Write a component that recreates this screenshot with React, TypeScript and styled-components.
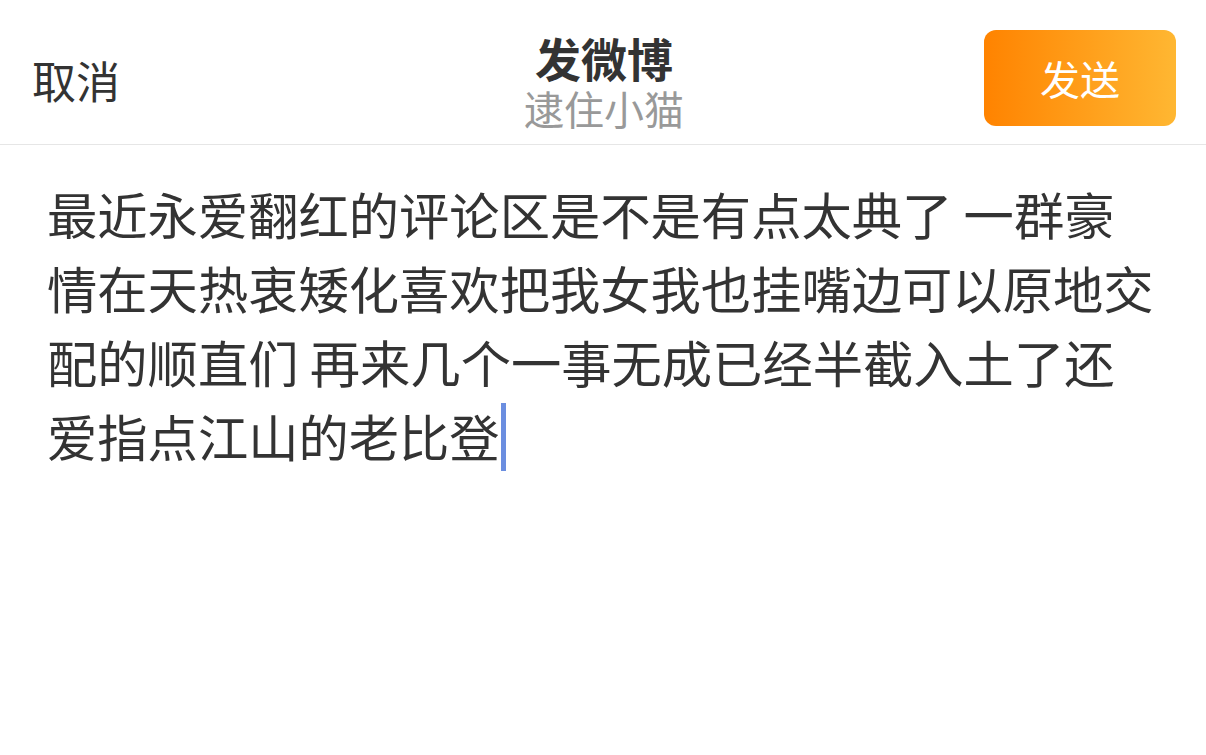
import styled, { createGlobalStyle } from 'styled-components';

const GlobalStyle = createGlobalStyle`
  html, body {
    margin: 0;
    padding: 0;
    background: #ffffff;
  }
  body {
    font-family: "Noto Sans CJK SC", "Noto Sans", sans-serif;
    color: #333333;
  }
`;

const Page = styled.div`
  width: 1206px;
  height: 755px;
  background: #ffffff;
  overflow: hidden;
`;

const Header = styled.header`
  height: 145px;
  box-sizing: border-box;
  border-bottom: 1px solid #e6e6e6;
  display: grid;
  grid-template-columns: 1fr auto 1fr;
  align-items: start;
  padding: 0 30px 0 32px;
`;

const Cancel = styled.button`
  justify-self: start;
  border: none;
  background: none;
  padding: 0;
  font-family: inherit;
  font-size: 44px;
  line-height: 1;
  color: #333333;
  margin-top: 58px;
`;

const TitleBlock = styled.div`
  display: flex;
  flex-direction: column;
  align-items: center;
  margin-top: 29px;
`;

const Title = styled.div`
  font-size: 46px;
  font-weight: 700;
  line-height: 57px;
  color: #333333;
`;

const Subtitle = styled.div`
  font-size: 40px;
  line-height: 44px;
  color: #999999;
`;

const SendButton = styled.button`
  justify-self: end;
  width: 192px;
  height: 96px;
  border: none;
  border-radius: 12px;
  background: linear-gradient(90deg, #ff8300 0%, #ffb732 100%);
  color: #ffffff;
  font-family: inherit;
  font-size: 40px;
  line-height: 1;
  margin-top: 30px;
`;

const Editor = styled.div`
  padding: 31px 47px 0 47px;
  font-size: 50.3px;
  line-height: 74px;
  color: #333333;
  word-break: break-all;
`;

const Caret = styled.span`
  display: inline-block;
  width: 5px;
  height: 68px;
  background: #6b8ee0;
  vertical-align: -14px;
  margin-left: 1px;
`;

const text =
  '最近永爱翻红的评论区是不是有点太典了 一群豪情在天热衷矮化喜欢把我女我也挂嘴边可以原地交配的顺直们 再来几个一事无成已经半截入土了还爱指点江山的老比登';

export default function App() {
  return (
    <Page>
      <GlobalStyle />
      <Header>
        <Cancel>取消</Cancel>
        <TitleBlock>
          <Title>发微博</Title>
          <Subtitle>逮住小猫</Subtitle>
        </TitleBlock>
        <SendButton>发送</SendButton>
      </Header>
      <Editor>
        {text}
        <Caret />
      </Editor>
    </Page>
  );
}
